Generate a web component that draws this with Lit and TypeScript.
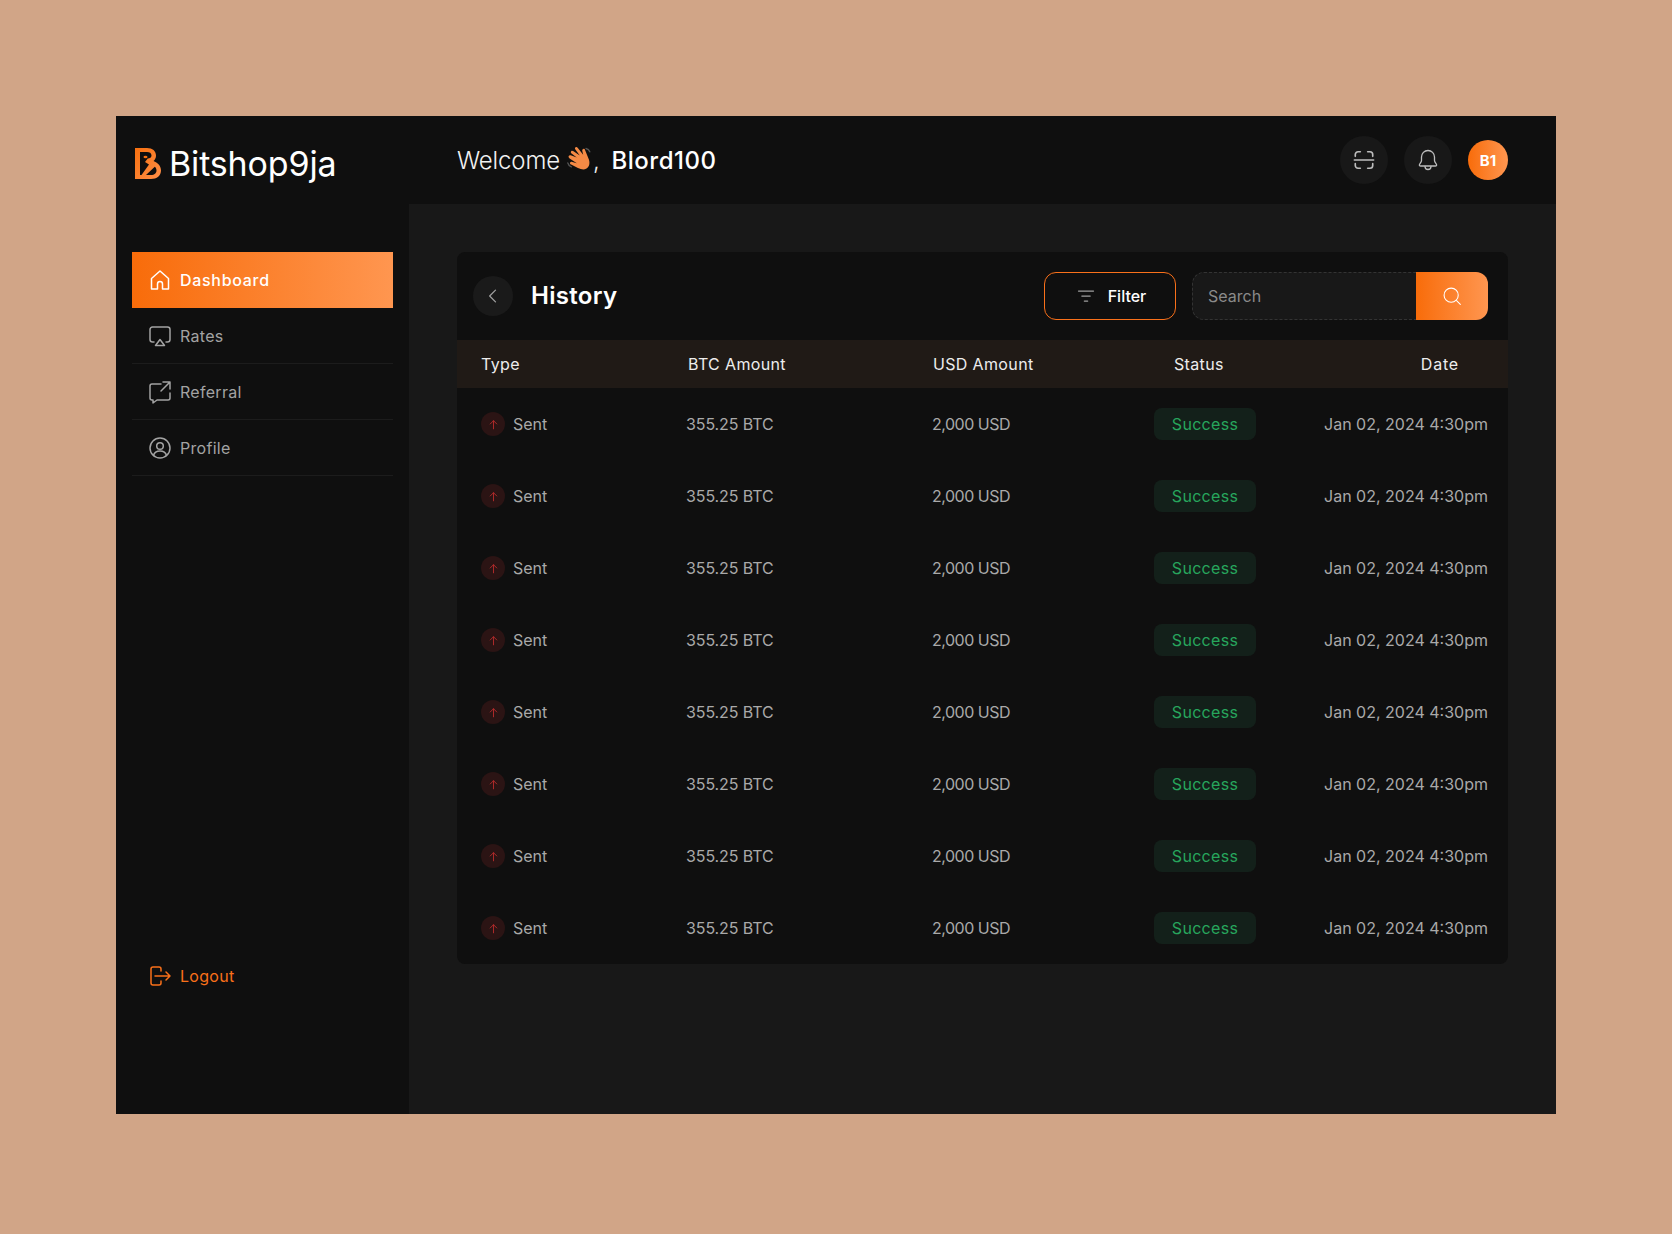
import { LitElement, html, css, svg } from "lit";
import { customElement } from "lit/decorators.js";

const ic = (body: unknown, size = 24, sw = 1.5) => html`<svg width=${size} height=${size} viewBox="0 0 24 24" fill="none" stroke="currentColor" stroke-width=${sw} stroke-linecap="round" stroke-linejoin="round">${body}</svg>`;

const icons = {
  home: svg`<path d="M3.500 10.500 12 3l8.500 7.500V21h-6v-5a2.500 2.500 0 0 0-5 0v5h-6z"/>`,
  rates: svg`<path d="M6 18H4.500A2.500 2.500 0 0 1 2 15.500V5.500A2.500 2.500 0 0 1 4.500 3h15A2.500 2.500 0 0 1 22 5.500v10a2.500 2.500 0 0 1-2.500 2.500H18"/><path d="M12 15.500 16.500 21.500h-9z"/>`,
  referral: svg`<path d="M13 4H4a2 2 0 0 0-2 2v12a2 2 0 0 0 2 2h1v3l4-3h11a2 2 0 0 0 2-2v-5"/><path d="M15 2h7v7M22 2l-9 9"/>`,
  profile: svg`<circle cx="12" cy="12" r="10"/><circle cx="12" cy="10" r="3.300"/><path d="M5.500 19.500c.8-3 3.400-4.500 6.500-4.500s5.700 1.500 6.500 4.500"/>`,
  logout: svg`<path d="M13 7V5a2 2 0 0 0-2-2H5a2 2 0 0 0-2 2v14a2 2 0 0 0 2 2h6a2 2 0 0 0 2-2v-2"/><path d="M7 12h15M18 8l4 4-4 4"/>`,
  scan: svg`<path d="M2.500 8V6a3 3 0 0 1 3-3h2.500M16 3h2.500a3 3 0 0 1 3 3v2M21.500 16v2a3 3 0 0 1-3 3H16M8 21H5.500a3 3 0 0 1-3-3v-2M1.500 12h21"/>`,
  bell: svg`<path d="M12 2.500a6.500 6.500 0 0 0-6.500 6.500v3.500c0 1.500-1.500 3-2 4-.4.900.2 1.500 1 1.500h15c.8 0 1.400-.6 1-1.500-.5-1-2-2.500-2-4V9A6.500 6.500 0 0 0 12 2.500z"/><path d="M9 18.500a3 3 0 0 0 6 0"/>`,
  back: svg`<path d="M15 5l-7 7 7 7"/>`,
  filter: svg`<path d="M3 6h18M7 12h10M10 18h4"/>`,
  search: svg`<circle cx="11" cy="11" r="8.500"/><path d="M17.500 17.500 22 22"/>`,
  up: svg`<path d="M12 20V5M6 11l6-6 6 6"/>`,
};

@customElement("app-root")
export class AppRoot extends LitElement {
  static styles = css`
    :host { display: block; height: 1234px; background: #d1a587; padding: 116px; box-sizing: border-box;
      font-family: Inter, "Noto Sans", sans-serif; font-size: 16px; color: #a9a9a9; }
    * { box-sizing: border-box; }
    .frame { width: 1440px; height: 998px; background: #0f0f0f; display: flex; flex-direction: column; }
    .top { height: 88px; flex: none; display: flex; align-items: center; padding-right: 48px; }
    .brand { width: 293px; flex: none; display: flex; align-items: center; gap: 8px; padding: 6px 0 0 19px; color: #fff; font-size: 34px; letter-spacing: -.15px; }
    .welcome { flex: 1; margin-left: 48px; display: flex; align-items: center; color: #f2f2f2; font-size: 24px; font-weight: 300; letter-spacing: -.15px; }
    .welcome b { font-weight: 500; color: #fff; margin-left: 12px; letter-spacing: .5px; }
    .hand { margin: 0 0 2px 7px; }
    .roundbtn { width: 48px; height: 48px; border-radius: 50%; background: #181818; color: #bdbdbd; display: flex; align-items: center; justify-content: center; margin-right: 16px; }
    .avatar { width: 40px; height: 40px; border-radius: 50%; background: linear-gradient(90deg, #f86c0a, #ff9650); color: #fff; font-weight: 700; font-size: 15px; display: flex; align-items: center; justify-content: center; }
    .body { flex: 1; display: flex; min-height: 0; }
    .side { width: 293px; flex: none; padding: 48px 16px 110px 16px; display: flex; flex-direction: column; }
    .item { height: 56px; display: flex; align-items: center; gap: 8px; padding-left: 16px; border-bottom: 1px solid #1c1c1c; color: #a3a3a3; letter-spacing: .3px; }
    .item.active { background: linear-gradient(90deg, #f86c0a, #ff9650); color: #fff; font-weight: 500; border-bottom: 0; letter-spacing: .7px; }
    .logout { margin-top: auto; color: #f9701a; border: 0; }
    .main { flex: 1; background: #181818; padding: 48px; }
    .card { background: #0f0f0f; border-radius: 8px; }
    .head { height: 88px; display: flex; align-items: center; padding: 0 20px 0 16px; }
    .back { width: 40px; height: 40px; border-radius: 50%; background: #1a1a1a; color: #a0a0a0; display: flex; align-items: center; justify-content: center; }
    h1 { margin: 0 0 2px 18px; flex: 1; color: #fff; font-size: 24px; font-weight: 600; letter-spacing: .3px; }
    .filter { width: 132px; height: 48px; border: 1px solid #f9701a; border-radius: 12px; display: flex; align-items: center; justify-content: center; gap: 12px; padding-left: 2px; color: #fff; font-weight: 500; margin-right: 16px; }
    .filter svg { color: #a0a0a0; }
    .search { width: 296px; height: 48px; display: flex; }
    .input { flex: 1; background: #181818; border: 1px dashed #333; border-right: 0; border-radius: 12px 0 0 12px; padding-left: 15px; display: flex; align-items: center; color: #8a8a8a; }
    .go { width: 72px; background: linear-gradient(90deg, #f86c0a, #ff9650); border-radius: 0 12px 12px 0; color: #fff; display: flex; align-items: center; justify-content: center; }
    .grid { display: grid; grid-template-columns: 205px 246px 222px 102px 1fr; align-items: center; padding: 0 20px 0 24px; }
    .ths { height: 48px; background: #201a16; color: #ededed; letter-spacing: .35px; }
    .ths .c { padding-left: 2px; }
    .ths .u { padding-left: 1px; }
    .ths .st { padding-left: 20px; }
    .ths .dt { text-align: right; padding-right: 29px; letter-spacing: .8px; }
    .row { height: 72px; }
    .type { display: flex; align-items: center; gap: 8px; }
    .arrow { width: 24px; height: 24px; border-radius: 50%; background: #2b1414; color: #b02a2a; display: flex; align-items: center; justify-content: center; }
    .btc { letter-spacing: -.1px; }
    .usd { letter-spacing: -.5px; }
    .badge { height: 32px; width: 102px; border-radius: 8px; background: #13201a; color: #27a65d; letter-spacing: .3px; display: flex; align-items: center; justify-content: center; }
    .date { text-align: right; white-space: nowrap; }
  `;

  render() {
    const nav: [string, unknown][] = [["Rates", icons.rates], ["Referral", icons.referral], ["Profile", icons.profile]];
    return html`<div class="frame">
      <header class="top">
        <div class="brand">
          <svg width="26" height="31" viewBox="0 0 26 31" fill="none">
            <defs><linearGradient id="lg" x1="0" x2="1" y1="0" y2="1"><stop offset="0" stop-color="#f8700f"/><stop offset="1" stop-color="#ff8f48"/></linearGradient></defs>
            <path fill-rule="evenodd" fill="url(#lg)" d="M0 0h12c5.500 0 9 3 9 7.500 0 2.300-.9 4.200-2.500 5.500 4 1.600 7.500 4.500 7.500 9.500 0 5-4.100 8.500-10 8.500H0zM5 4v23h1.500L14 16.500l-4-2.500 2.700-3.500c2.300-.2 3.800-1.300 3.800-3.100C16.500 5.200 14.500 4 12 4zM11 27h5c3.500 0 5.500-2 5.500-4.500 0-1.500-.5-2.700-1.700-3.800z"/>
            <ellipse cx="10.500" cy="9" rx="2" ry="1.200" fill="#f8700f"/>
          </svg>
          <span>Bitshop9ja</span>
        </div>
        <div class="welcome">Welcome
          <svg class="hand" width="26" height="26" viewBox="0 0 26 26" fill="none">
            <g transform="rotate(-32 13 13)"><path fill="#f58a45" d="M5 4.500c1-.6 1.800 0 2.500 1L11 10 8.800 3.800c-.4-1.100.1-1.900.9-2.100.9-.3 1.500.3 1.900 1.300l3 7-.5-7.500c-.1-1.100.5-1.800 1.400-1.800s1.400.7 1.500 1.800l1 8.500 1.200-3.600c.4-1 1.100-1.500 1.900-1.200.8.200 1.200 1 .9 2.100L20.500 17c-.7 4.500-3.500 7.500-7 7.500-3 0-5-2-7-5L2.500 13c-.6-1-.4-1.800.3-2.300.7-.4 1.500-.1 2.100.7L8 15 4.500 7c-.4-1.100-.3-2 .5-2.500z"/></g>
            <path stroke="#555" stroke-width="1.300" stroke-linecap="round" d="M19 2.500c1.800.3 3.200 1.500 3.800 3.300M.8 17c.5 1.800 1.800 3.200 3.500 3.900"/>
          </svg><span>,</span><b>Blord100</b>
        </div>
        <div class="roundbtn">${ic(icons.scan, 22, 1.800)}</div>
        <div class="roundbtn">${ic(icons.bell, 24, 1.300)}</div>
        <div class="avatar">B1</div>
      </header>
      <div class="body">
        <nav class="side">
          <div class="item active">${ic(icons.home)}<span>Dashboard</span></div>
          ${nav.map(([t, i]) => html`<div class="item">${ic(i)}<span>${t}</span></div>`)}
          <div class="item logout">${ic(icons.logout)}<span>Logout</span></div>
        </nav>
        <main class="main">
          <section class="card">
            <div class="head">
              <div class="back">${ic(icons.back, 20)}</div>
              <h1>History</h1>
              <div class="filter">${ic(icons.filter, 20)}<span>Filter</span></div>
              <div class="search"><div class="input">Search</div><div class="go">${ic(icons.search, 20, 1.300)}</div></div>
            </div>
            <div class="grid ths">
              <div>Type</div><div class="c">BTC Amount</div><div class="u">USD Amount</div><div class="st">Status</div><div class="dt">Date</div>
            </div>
            ${Array.from({ length: 8 }).map(() => html`<div class="grid row">
              <div class="type"><span class="arrow">${ic(icons.up, 13, 1.800)}</span>Sent</div>
              <div class="btc">355.25 BTC</div><div class="usd">2,000 USD</div>
              <div class="badge">Success</div>
              <div class="date">Jan 02, 2024 4:30pm</div>
            </div>`)}
          </section>
        </main>
      </div>
    </div>`;
  }
}
